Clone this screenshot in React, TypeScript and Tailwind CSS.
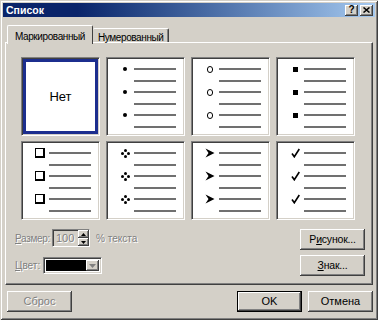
import type { ReactNode } from 'react';

const raised =
  'bg-[#d4d0c8] shadow-[inset_-1px_-1px_0_#404040,inset_1px_1px_0_#ffffff,inset_-2px_-2px_0_#808080,inset_2px_2px_0_#d4d0c8]';
const sunken =
  'border border-t-[#808080] border-l-[#808080] border-b-white border-r-white shadow-[inset_1px_1px_0_#404040,inset_-1px_-1px_0_#d4d0c8]';
const disabled = 'text-[#808080] [text-shadow:1px_1px_0_#ffffff]';

const Line = () => <span className="block h-[2px] w-[42px] bg-[#707070]" />;

// маркеры в ячейках
const Dot = () => <span className="block h-[4px] w-[4px] rounded-full bg-black" />;
const Ring = () => <span className="block h-[7px] w-[6px] rounded-full border border-black" />;
const Square = () => <span className="block h-[5px] w-[5px] bg-black" />;
const Box = () => (
  <span className="block h-[10px] w-[10px] border border-black bg-white shadow-[inset_-1px_-1px_0_#000]" />
);
const Diamond = () => (
  <svg width="9" height="9" viewBox="0 0 9 9">
    <circle cx="4.5" cy="1.5" r="1.5" fill="#000" />
    <circle cx="1.5" cy="4.5" r="1.5" fill="#000" />
    <circle cx="7.5" cy="4.5" r="1.5" fill="#000" />
    <circle cx="4.5" cy="7.5" r="1.5" fill="#000" />
  </svg>
);
const Arrow = () => (
  <svg width="10" height="10" viewBox="0 0 10 10">
    <path d="M0.5 0.5 L9.5 5 L0.5 9.5 L3.5 5 Z" fill="#000" />
  </svg>
);
const Check = () => (
  <svg width="9" height="10" viewBox="0 0 9 10">
    <path d="M1 5.5 L3.3 8.8 L8.3 1" fill="none" stroke="#000" strokeWidth="1.6" />
  </svg>
);

const cellBase = `h-[79px] w-[79px] bg-white ${sunken}`;

const BulletCell = ({ bullet }: { bullet: ReactNode }) => (
  <div className={cellBase}>
    <div className="flex flex-col pt-[5px]">
      {[0, 1, 2].map((i) => (
        <div key={i} className="flex flex-col">
          <div className="flex h-[12px] items-center">
            <span className="ml-[9px] flex w-[18px] justify-center">{bullet}</span>
            <Line />
          </div>
          <div className="flex h-[11px] items-center pl-[27px]">
            <Line />
          </div>
        </div>
      ))}
    </div>
  </div>
);

const Btn = ({ children, className = '' }: { children: ReactNode; className?: string }) => (
  <div className={`flex h-[21px] w-[65px] items-center justify-center ${raised} ${className}`}>{children}</div>
);

export default function App() {
  return (
    <div className="flex h-[320px] w-[378px] flex-col bg-[#d4d0c8] p-[3px] font-['Liberation_Sans',Arial,sans-serif] text-[11px] text-black shadow-[inset_1px_1px_0_#d4d0c8,inset_-1px_-1px_0_#404040,inset_2px_2px_0_#ffffff,inset_-2px_-2px_0_#808080]">
      {/* заголовок */}
      <div className="flex h-[14px] items-center justify-between bg-linear-to-r from-[#0a246a] from-20% to-[#a6caf0] pl-[3px] pr-[2px]">
        <span className="text-[10.5px] font-bold leading-none text-white">Список</span>
        <div className="flex gap-[2px]">
          <div className={`flex h-[11px] w-[13px] items-center justify-center text-[10px] font-bold leading-none ${raised}`}>
            ?
          </div>
          <div className={`flex h-[11px] w-[13px] items-center justify-center ${raised}`}>
            <svg width="7" height="6" viewBox="0 0 7 6">
              <path d="M0.5 0.5 L6.5 5.5 M6.5 0.5 L0.5 5.5" stroke="#000" strokeWidth="1.5" />
            </svg>
          </div>
        </div>
      </div>

      {/* вкладки */}
      <div className="relative z-10 mt-[8px] flex h-[17px] items-end pl-[4px] text-[10px] tracking-[-0.4px]">
        <div className="-mb-[2px] flex h-[19px] items-start rounded-t-[2px] border-t border-l border-r border-t-white border-l-white border-r-[#404040] bg-[#d4d0c8] px-[7px] pt-[3px]">
          Маркированный
        </div>
        <div className="flex h-[14px] items-start rounded-t-[2px] border-t border-r border-t-white border-r-[#404040] bg-[#d4d0c8] px-[5px] pt-[1px] shadow-[inset_-1px_0_0_#808080]">
          Нумерованный
        </div>
      </div>

      <div className="ml-[2px] mr-[2px] flex h-[243px] flex-col border border-t-white border-l-white border-b-[#404040] border-r-[#404040] pt-[14px] pl-[15px] shadow-[inset_-1px_-1px_0_#808080]">
        <div className="grid grid-cols-[repeat(4,79px)] gap-x-[6px] gap-y-[5px]">
          <div className={cellBase}>
            <div className="h-full p-[1px]">
              <div className="flex h-full items-center justify-center border-[3px] border-[#1c2e8e] text-[13px]">
                Нет
              </div>
            </div>
          </div>
          <BulletCell bullet={<Dot />} />
          <BulletCell bullet={<Ring />} />
          <BulletCell bullet={<Square />} />
          <BulletCell bullet={<Box />} />
          <BulletCell bullet={<Diamond />} />
          <BulletCell bullet={<Arrow />} />
          <BulletCell bullet={<Check />} />
        </div>

        <div className="-ml-[6px] mt-[9px] flex items-start justify-between pr-[7px]">
          <div className="flex flex-col">
            <div className="flex h-[18px] items-center">
              <span className={`w-[37px] whitespace-nowrap text-[10px] tracking-[-0.3px] ${disabled}`}>
                <span className="underline">Р</span>азмер:
              </span>
              <div className={`flex h-[18px] w-[38px] items-stretch ${sunken} bg-[#d4d0c8]`}>
                <span className={`flex flex-1 items-center pl-[3px] ${disabled}`}>100</span>
                <div className="flex w-[11px] flex-col">
                  <div className={`flex flex-1 items-center justify-center ${raised}`}>
                    <svg width="5" height="3" viewBox="0 0 5 3">
                      <path d="M2.5 0 L5 3 L0 3 Z" fill="#000" />
                    </svg>
                  </div>
                  <div className={`flex flex-1 items-center justify-center ${raised}`}>
                    <svg width="5" height="3" viewBox="0 0 5 3">
                      <path d="M0 0 L5 0 L2.5 3 Z" fill="#000" />
                    </svg>
                  </div>
                </div>
              </div>
              <span className={`ml-[6px] text-[10px] ${disabled}`}>% текста</span>
            </div>
            <div className="mt-[10px] flex h-[17px] items-center">
              <span className={`w-[28px] text-[10px] ${disabled}`}>
                <span className="underline">Ц</span>вет:
              </span>
              <div className={`flex h-[17px] w-[59px] items-stretch bg-white p-[2px] ${sunken}`}>
                <span className="flex-1 bg-black" />
                <div className={`flex w-[13px] items-center justify-center ${raised}`}>
                  <svg width="7" height="4" viewBox="0 0 7 4">
                    <path d="M0 0 L7 0 L3.5 4 Z" fill="#808080" />
                  </svg>
                </div>
              </div>
            </div>
          </div>
          <div className="flex flex-col gap-[5px] text-[10.5px] tracking-[-0.2px]">
            <Btn className="h-[20px]">
              <span>
                Р<span className="underline">и</span>сунок...
              </span>
            </Btn>
            <Btn className="h-[20px]">
              <span>
                <span className="underline">З</span>нак...
              </span>
            </Btn>
          </div>
        </div>
      </div>

      {/* кнопки диалога */}
      <div className="mt-[6px] flex items-center justify-between pl-[4px] pr-[2px]">
        <Btn>
          <span className={disabled}>Сброс</span>
        </Btn>
        <div className="flex gap-[6px]">
          <div className="flex h-[21px] w-[65px] border border-black">
            <div className={`flex flex-1 items-center justify-center ${raised}`}>OK</div>
          </div>
          <Btn>Отмена</Btn>
        </div>
      </div>
    </div>
  );
}
